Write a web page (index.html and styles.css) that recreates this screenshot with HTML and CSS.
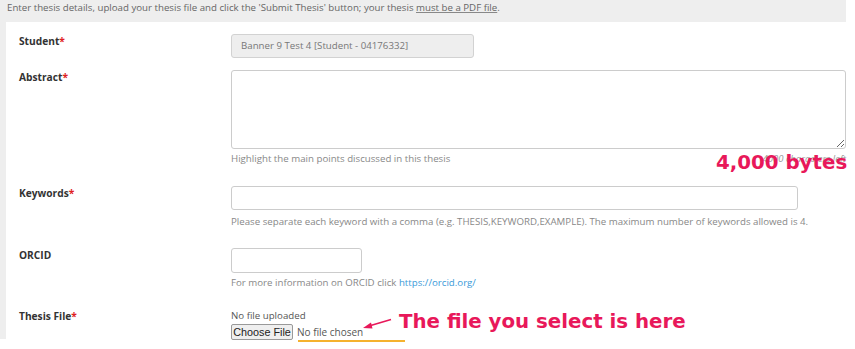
FILE: index.html
```html
<!DOCTYPE html>
<html>
<head>
<meta charset="utf-8">
<link rel="stylesheet" href="styles.css">
</head>
<body>
<div class="outer">
  <div class="intro">Enter thesis details, upload your thesis file and click the 'Submit Thesis' button; your thesis <u>must be a PDF file</u>.</div>
  <div class="panel">
    <div class="row r-student">
      <div class="label">Student<span class="req">*</span></div>
      <div class="field"><div class="input readonly">Banner 9 Test 4 [Student - 04176332]</div></div>
    </div>
    <div class="row r-abstract">
      <div class="label">Abstract<span class="req">*</span></div>
      <div class="field">
        <textarea class="textarea"></textarea>
        <div class="help help-split"><span>Highlight the main points discussed in this thesis</span><span class="counter">4000 characters left</span></div>
        <div class="note note-bytes">4,000 bytes</div>
      </div>
    </div>
    <div class="row r-keywords">
      <div class="label">Keywords<span class="req">*</span></div>
      <div class="field">
        <div class="input kw"></div>
        <div class="help help-kw">Please separate each keyword with a comma (e.g. THESIS,KEYWORD,EXAMPLE). The maximum number of keywords allowed is 4.</div>
      </div>
    </div>
    <div class="row r-orcid">
      <div class="label">ORCID</div>
      <div class="field">
        <div class="input orcid"></div>
        <div class="help">For more information on ORCID click <a class="link">https://orcid.org/</a></div>
      </div>
    </div>
    <div class="row r-file">
      <div class="label">Thesis File<span class="req">*</span></div>
      <div class="field">
        <div class="nofile">No file uploaded</div>
        <div class="fileinput"><button class="choose">Choose File</button><span class="chosen">No file chosen</span></div>
        <div class="annot">
          <svg class="arrow" width="30" height="12" viewBox="0 0 30 12"><line x1="28" y1="1.5" x2="6" y2="8" stroke="#e8185a" stroke-width="1.6"/><polygon points="0,10 8,4.5 9.5,10.5" fill="#e8185a"/></svg>
          <span class="note">The file you select is here</span>
        </div>
        <div class="underline"></div>
      </div>
    </div>
  </div>
</div>
</body>
</html>
```
FILE: styles.css
```css
html, body { margin: 0; padding: 0; background: #fff; }
body { font-family: "Open Sans", "Liberation Sans", sans-serif; font-size: 9.7px; color: #333; min-height: 349px; }
.outer { width: 840px; height: 339px; background: #eee; padding-left: 6px; }
.intro { height: 22px; line-height: 15px; padding-left: 1px; color: #666; font-size: 9.7px; }
.intro u { text-decoration-color: #888; }
.panel { background: #fff; height: 317px; padding: 12px 0 0 13px; box-sizing: border-box; }
.row { display: grid; grid-template-columns: 212px 1fr; }
.label { font-weight: 700; color: #333; line-height: 14px; font-size: 10.2px; }
.req { color: #e02020; }
.field { position: relative; }
.input { box-sizing: border-box; height: 24px; border: 1px solid #ccc; border-radius: 3px; background: #fff; }
.readonly { width: 243px; background: #eee; color: #777; padding-left: 9px; line-height: 22px; border-color: #d2d2d2; }
.r-student { margin-bottom: 12px; }
.textarea { display: block; box-sizing: border-box; width: 615px; height: 79px; border: 1px solid #ccc; border-radius: 3px; margin: 0; padding: 4px; font-family: inherit; }
.help { color: #888; line-height: 16px; margin-top: 2px; white-space: nowrap; }
.help-kw { margin-top: 4px; }
.help-split { display: flex; justify-content: space-between; width: 615px; }
.counter { font-style: italic; font-size: 9.5px; color: #999; }
.r-abstract { margin-bottom: 19px; }
.kw { width: 567px; }
.r-keywords { margin-bottom: 18px; }
.orcid { width: 131px; height: 25px; }
.link { color: #3a9ad9; }
.r-orcid { margin-bottom: 18px; }
.nofile { color: #555; line-height: 14px; }
.fileinput { display: flex; align-items: center; height: 17px; }
.choose { font-family: "Liberation Sans", Arial, sans-serif; font-size: 10.8px; color: #222; background: #efefef; border: 1px solid #999; border-radius: 2px; padding: 0; height: 16px; line-height: 14px; width: 62px; box-sizing: border-box; margin: 0; }
.chosen { margin-left: 4px; color: #555; font-size: 10px; }
.note { font-family: "DejaVu Sans", Verdana, sans-serif; font-weight: 700; color: #e8185a; font-size: 19.8px; white-space: nowrap; line-height: 24px; }
.note-bytes { position: absolute; left: 485px; top: 81px; }
.annot { position: absolute; left: 132px; top: 1px; display: flex; align-items: center; gap: 6px; }
.arrow { margin-top: 4px; }
.underline { position: absolute; left: 67px; top: 31px; width: 107px; height: 2px; background: #f5b22e; z-index: 2; }
```
